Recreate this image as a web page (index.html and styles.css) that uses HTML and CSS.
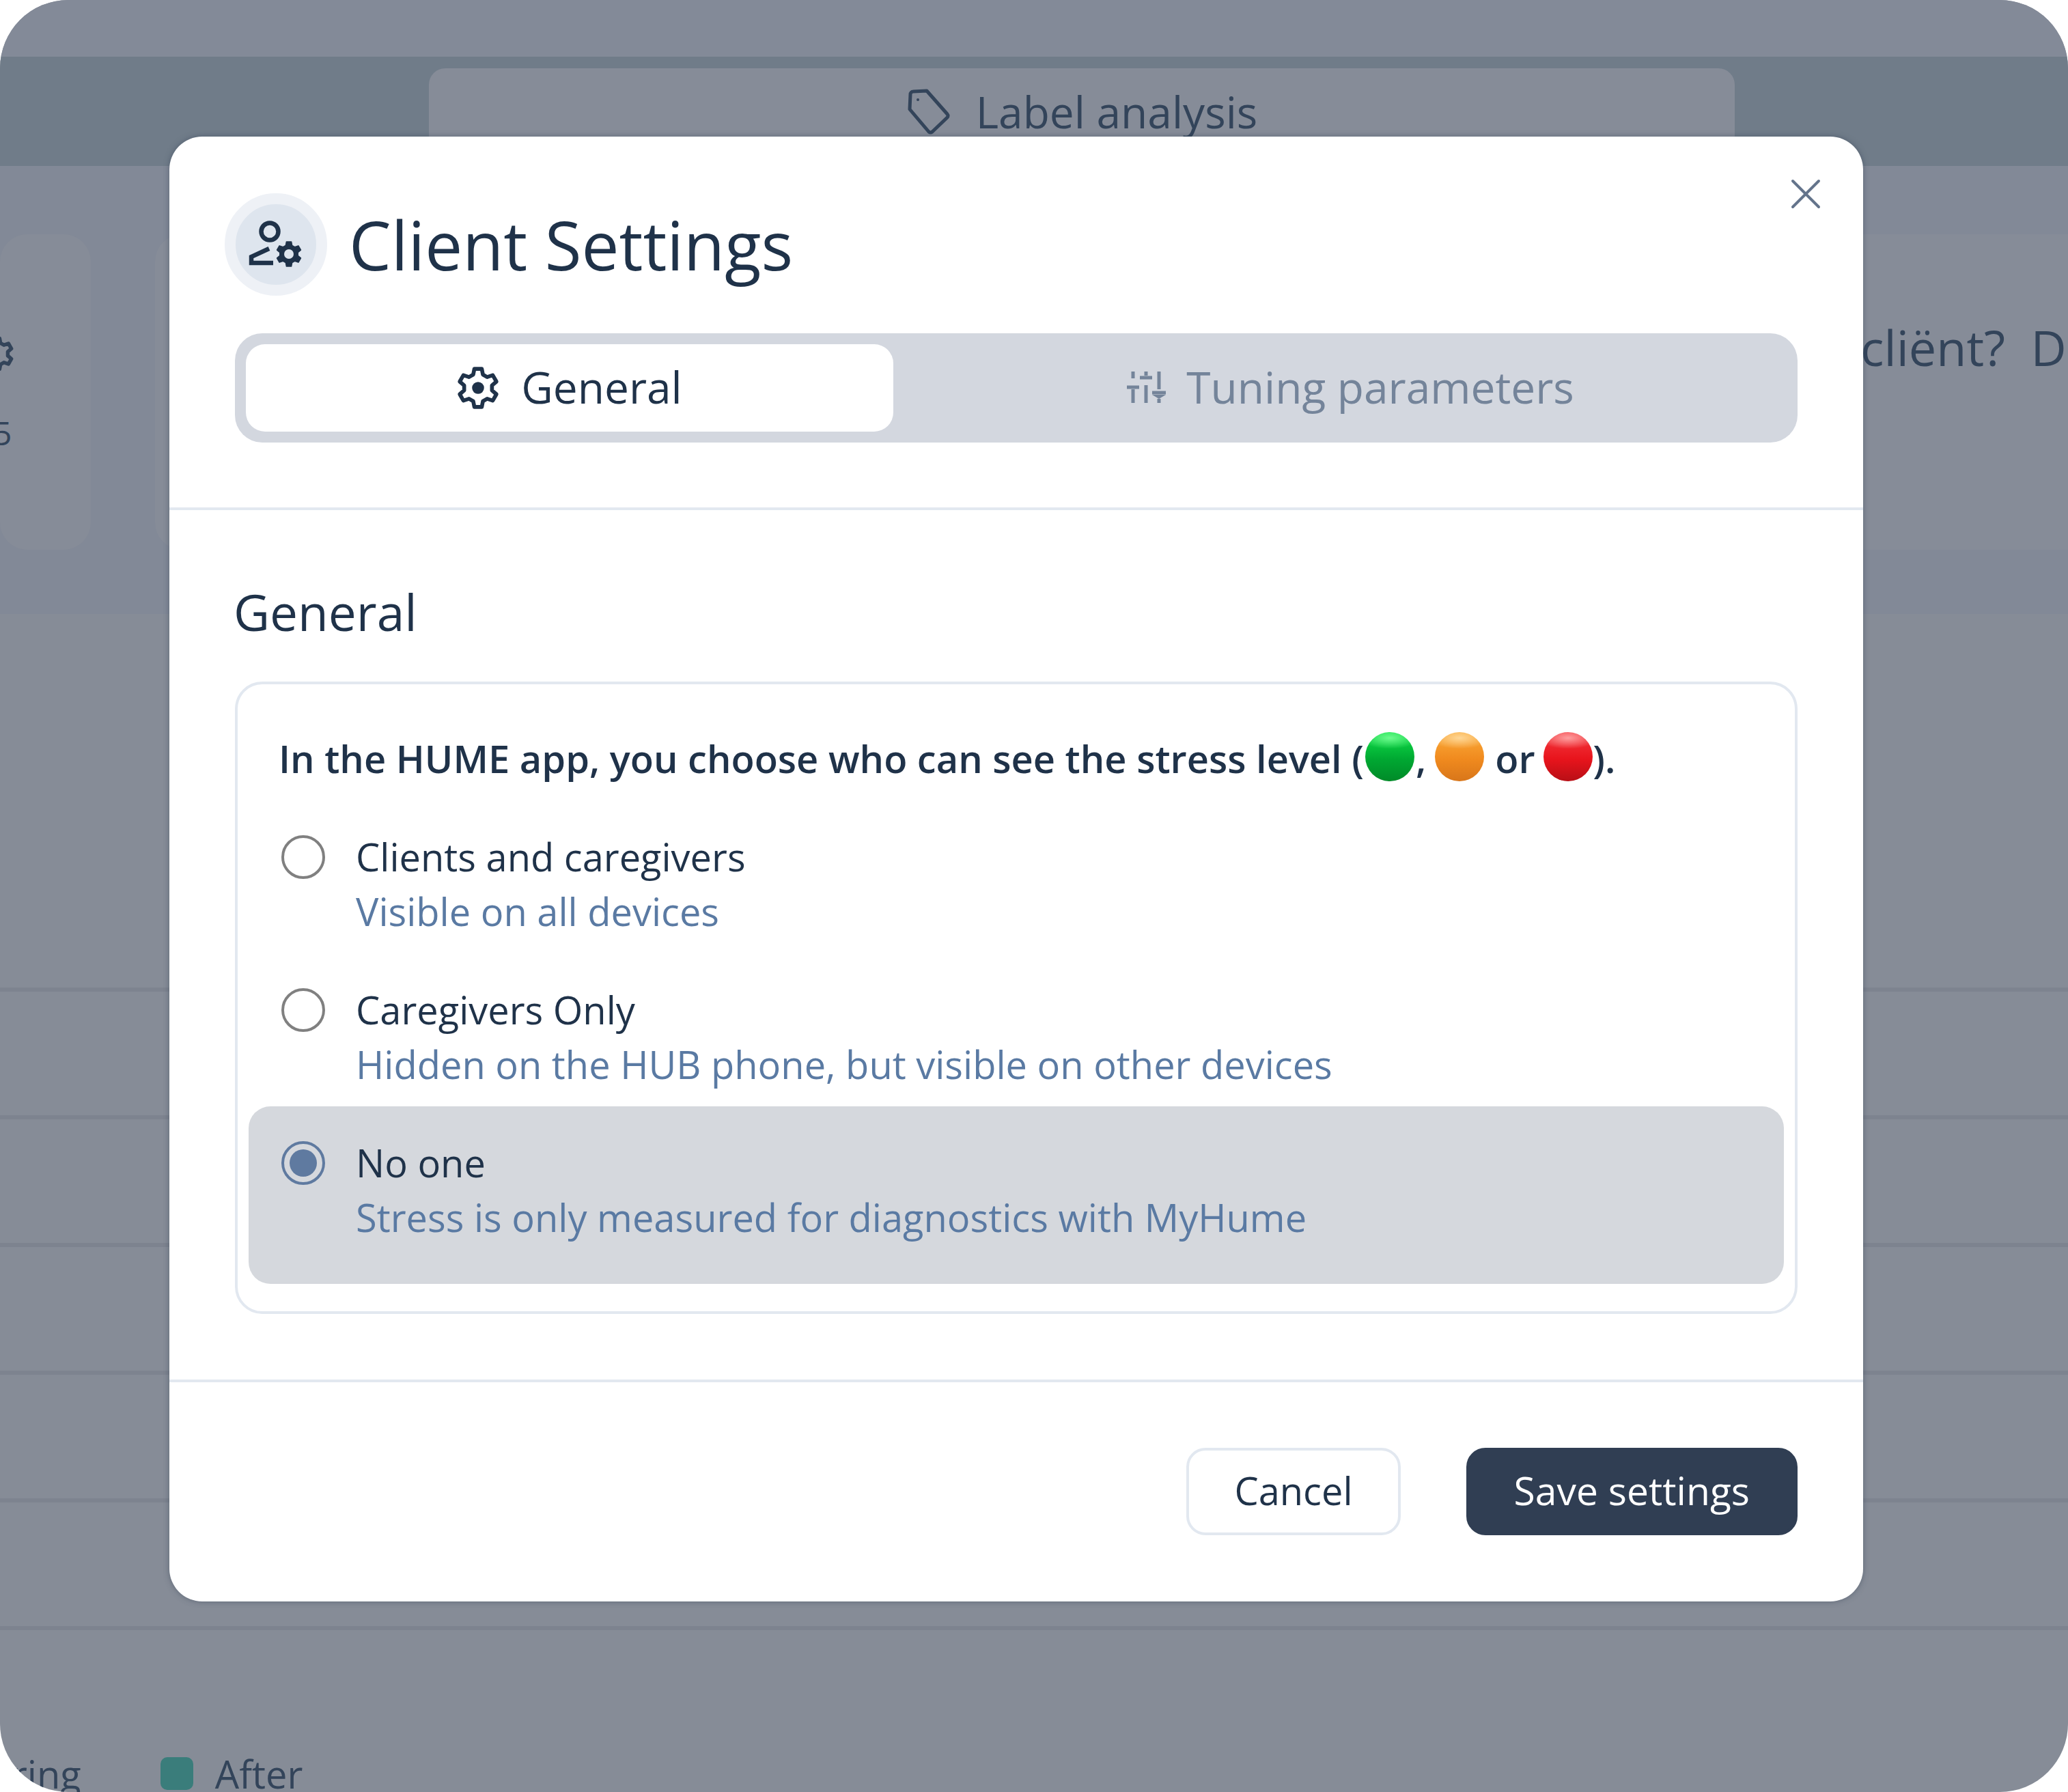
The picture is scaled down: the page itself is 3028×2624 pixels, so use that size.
FILE: index.html
```html
<!DOCTYPE html>
<html lang="en">
<head>
  <meta charset="UTF-8" />
  <title>Client Settings</title>
  <link rel="stylesheet" href="styles.css">
</head>
<body>
  <svg class="defs" width="0" height="0">
    <symbol id="gear" viewBox="0 0 24 24">
      <polygon points="9.26,4.48 9.9,1.2 14.1,1.2 14.74,4.48 17.14,5.87 20.3,4.78 22.4,8.42 19.88,10.61 19.88,13.39 22.4,15.58 20.3,19.22 17.14,18.13 14.74,19.52 14.1,22.8 9.9,22.8 9.26,19.52 6.86,18.13 3.7,19.22 1.6,15.58 4.12,13.39 4.12,10.61 1.6,8.42 3.7,4.78 6.86,5.87" stroke="currentColor" stroke-linejoin="round"/>
    </symbol>
  </svg>

  <div class="stage">
    <!-- page behind the dialog -->
    <div class="topbar"></div>
    <div class="subnav">
      <div class="subnav-tab">
        <svg class="tag-icon" viewBox="0 0 64 68" fill="none" stroke="currentColor" stroke-width="5" stroke-linejoin="round">
          <path d="M6 8 a4 4 0 0 1 4-4 L30 3 L60 37 a4 4 0 0 1 0 5 L38 63 a4 4 0 0 1-5 0 L5 30 Z"/>
          <circle cx="17" cy="16" r="2" fill="currentColor" stroke="none"/>
        </svg>
        <span>Label analysis</span>
      </div>
    </div>
    <div class="summary">
      <div class="stat stat-a">
        <svg class="stat-gear" viewBox="0 0 24 24"><use href="#gear" fill="none" stroke-width="2.6"/></svg>
        <span class="stat-num">5</span>
      </div>
      <div class="stat stat-b"></div>
      <div class="stat stat-c"><span class="question">cliënt?&nbsp; De</span></div>
    </div>
    <div class="rows">
      <div class="row-line"></div>
      <div class="row-line"></div>
      <div class="row-line"></div>
      <div class="row-line"></div>
      <div class="row-line"></div>
      <div class="row-line"></div>
    </div>
    <div class="legend">
      <span class="legend-during">During</span>
      <span class="swatch"></span>
      <span>After</span>
    </div>

    <!-- dialog -->
    <div class="modal">
      <svg class="close" viewBox="0 0 44 44" stroke="currentColor" stroke-width="4" stroke-linecap="round">
        <path d="M3 3 L41 41 M41 3 L3 41"/>
      </svg>
      <div class="modal-top">
        <div class="modal-head">
          <div class="head-icon">
            <svg viewBox="0 0 82 70" fill="none" stroke="currentColor" stroke-width="6.5">
              <circle cx="32" cy="16" r="12.5"/>
              <path d="M31 41 L5 53 L5 62 L37 62"/>
              <use href="#gear" x="40" y="29" width="40" height="40" fill="currentColor" stroke-width="1"/>
              <circle cx="60" cy="49" r="7" fill="#dee5ee" stroke="none"/>
            </svg>
          </div>
          <h1>Client Settings</h1>
        </div>
        <div class="tabs">
          <div class="tab tab-active">
            <svg class="tab-gear" viewBox="0 0 24 24"><use href="#gear" fill="none" stroke-width="2.2"/><circle cx="12" cy="12" r="3.4" fill="currentColor"/></svg>
            <span>General</span>
          </div>
          <div class="tab tab-idle">
            <svg class="tab-sliders" viewBox="0 0 54 46" fill="none" stroke="currentColor" stroke-width="5">
              <path d="M8 0 V10 M8 26 V46 M-1 23 H17"/>
              <path d="M27 0 V6 M27 20 V46 M18 9 H36"/>
              <path d="M46 0 V26 M46 40 V46"/>
              <path d="M36 34 H56 L46 40 Z" fill="currentColor" stroke="none"/>
              <path d="M36 31 H56" />
            </svg>
            <span>Tuning parameters</span>
          </div>
        </div>
      </div>

      <div class="modal-body">
        <h2>General</h2>
        <div class="panel">
          <p class="intro">In the HUME app, you choose who can see the stress level (<span class="ball ball-green"></span>, <span class="ball ball-orange"></span> or <span class="ball ball-red"></span>).</p>
          <div class="option">
            <span class="radio"></span>
            <div class="option-text">
              <div class="option-label">Clients and caregivers</div>
              <div class="option-sub">Visible on all devices</div>
            </div>
          </div>
          <div class="option">
            <span class="radio"></span>
            <div class="option-text">
              <div class="option-label">Caregivers Only</div>
              <div class="option-sub">Hidden on the HUB phone, but visible on other devices</div>
            </div>
          </div>
          <div class="option option-selected">
            <span class="radio radio-on"></span>
            <div class="option-text">
              <div class="option-label">No one</div>
              <div class="option-sub">Stress is only measured for diagnostics with MyHume</div>
            </div>
          </div>
        </div>
      </div>

      <div class="modal-foot">
        <button class="btn btn-cancel">Cancel</button>
        <button class="btn btn-save">Save settings</button>
      </div>
    </div>
  </div>
</body>
</html>
```

FILE: styles.css
```css
* {
  box-sizing: border-box;
}
body {
  margin: 0;
  background: #fff;
  font-family: "Open Sans", sans-serif;
  color: #1f3249;
}
.defs {
  position: absolute;
}
.stage {
  position: relative;
  width: 3028px;
  height: 2624px;
  border-radius: 100px;
  overflow: hidden;
  background: #868c97;
  color: #33445a;
  font-size: 64px;
}

/* backdrop */
.topbar {
  height: 83px;
  background: #838a98;
}
.subnav {
  height: 160px;
  padding: 17px 0 0 628px;
  background: #707c89;
}
.subnav-tab {
  display: flex;
  align-items: center;
  justify-content: center;
  gap: 38px;
  width: 1912px;
  height: 143px;
  padding-bottom: 16px;
  background: #868c98;
  border-radius: 24px 24px 0 0;
}
.tag-icon {
  width: 64px;
  height: 68px;
}
.summary {
  display: flex;
  height: 656px;
  padding-top: 100px;
  padding-bottom: 94px;
  background: #828997;
}
.stat {
  background: #868c98;
  border-radius: 40px;
}
.stat-a {
  position: relative;
  width: 133px;
  flex: none;
}
.stat-gear {
  position: absolute;
  left: -30px;
  top: 150px;
  width: 50px;
  height: 50px;
}
.stat-num {
  position: absolute;
  left: -10px;
  top: 258px;
  font-size: 48px;
}
.stat-b {
  width: 1400px;
  flex: none;
  margin-left: 94px;
}
.stat-c {
  flex: 1;
  margin-left: 400px;
  padding: 116px 0 0 697px;
  border-radius: 0;
  white-space: nowrap;
  font-size: 72px;
  line-height: 98px;
}
.rows {
  padding-top: 366px;
}
.row-line {
  height: 187px;
  border-bottom: 6px solid #7d838f;
}
.legend {
  display: flex;
  align-items: center;
  gap: 32px;
  margin-top: 172px;
  margin-left: -58px;
  font-size: 56px;
  line-height: 76px;
}
.legend-during {
  margin-right: 84px;
}
.swatch {
  width: 48px;
  height: 48px;
  background: #3a7d7b;
  border-radius: 10px;
}

/* dialog */
.modal {
  position: absolute;
  left: 248px;
  top: 200px;
  width: 2480px;
  height: 2145px;
  background: #fff;
  border-radius: 48px;
  box-shadow: 0 0 8px rgba(51, 65, 85, 0.5);
  color: #1f3249;
}
.close {
  position: absolute;
  right: 62px;
  top: 62px;
  width: 44px;
  height: 44px;
  color: #64748b;
}
.modal-top {
  height: 547px;
  padding: 83px 96px 0 81px;
  border-bottom: 4px solid #e2e8f0;
}
.modal-head {
  display: flex;
  align-items: center;
  gap: 32px;
}
.head-icon {
  display: flex;
  align-items: center;
  justify-content: center;
  width: 150px;
  height: 150px;
  background: #dee5ee;
  border: 16px solid #eef1f6;
  border-radius: 50%;
}
.head-icon svg {
  width: 82px;
  height: 70px;
}
h1 {
  margin: 0;
  font-size: 98px;
  font-weight: 500;
  line-height: 130px;
}
.tabs {
  display: flex;
  height: 160px;
  margin: 55px 0 0 15px;
  padding: 16px 16px 20px;
  background: #d3d7df;
  border-radius: 40px;
  font-size: 64px;
}
.tab {
  display: flex;
  align-items: center;
  justify-content: center;
  gap: 32px;
}
.tab-active {
  width: 948px;
  height: 128px;
  padding-bottom: 4px;
  background: #fff;
  border-radius: 28px;
}
.tab-idle {
  flex: 1;
  height: 124px;
  padding-left: 32px;
  color: #74849a;
}
.tab-gear {
  width: 62px;
  height: 62px;
  margin-top: 4px;
}
.tab-sliders {
  width: 54px;
  height: 46px;
  margin-top: 2px;
  overflow: visible;
}
.modal-body {
  height: 1277px;
  padding: 99px 96px 0;
  border-bottom: 4px solid #e2e8f0;
}
h2 {
  margin: 0 0 52px -2px;
  font-size: 73px;
  font-weight: 500;
  line-height: 100px;
}
.panel {
  height: 926px;
  padding: 68px 16px 0;
  border: 4px solid #e2e8f0;
  border-radius: 40px;
}
.intro {
  margin: 0 0 20px 44px;
  font-size: 56px;
  font-weight: 600;
  line-height: 80px;
  white-space: nowrap;
}
.ball {
  display: inline-block;
  width: 72px;
  height: 72px;
  margin: 0 2px;
  vertical-align: -12px;
  border-radius: 50%;
}
.ball-green {
  background: radial-gradient(ellipse 60% 22% at 50% 12%, rgba(120, 255, 150, 0.9), transparent), linear-gradient(#10e048, #00a832 55%, #008a28);
}
.ball-orange {
  margin-left: -2px;
  background: radial-gradient(ellipse 60% 22% at 50% 12%, rgba(255, 220, 160, 0.9), transparent), linear-gradient(#fbab3a, #f08a1e 55%, #d8761a);
}
.ball-red {
  margin: 0 0 0 -2px;
  background: radial-gradient(ellipse 60% 22% at 50% 12%, rgba(255, 170, 170, 0.9), transparent), linear-gradient(#f43a40, #e8141c 55%, #b80f16);
}
.option {
  display: flex;
  gap: 45px;
  padding: 44px 48px 20px;
  border-radius: 32px;
}
.option-selected {
  margin-top: 2px;
  padding-top: 42px;
  padding-bottom: 58px;
  background: #d5d8dd;
}
.radio {
  flex: none;
  width: 64px;
  height: 64px;
  margin-top: 9px;
  background: #fff;
  border: 4px solid #808080;
  border-radius: 50%;
}
.radio-on {
  padding: 8px;
  background: #5f7aa0 content-box;
  border-color: #5f7aa0;
}
.option-text {
  font-size: 56px;
  line-height: 80px;
  white-space: nowrap;
}
.option-sub {
  color: #5a7aa3;
}
.modal-foot {
  display: flex;
  justify-content: flex-end;
  gap: 96px;
  padding: 96px 96px 0;
}
.btn {
  height: 128px;
  padding: 0 66px 4px;
  font-family: inherit;
  font-size: 56px;
  border-radius: 28px;
  border: 4px solid #e2e8f0;
  background: #fff;
  color: #1f3249;
}
.btn-save {
  background: #303e53;
  border-color: #303e53;
  color: #fff;
  font-size: 57px;
  font-weight: 500;
}
```
